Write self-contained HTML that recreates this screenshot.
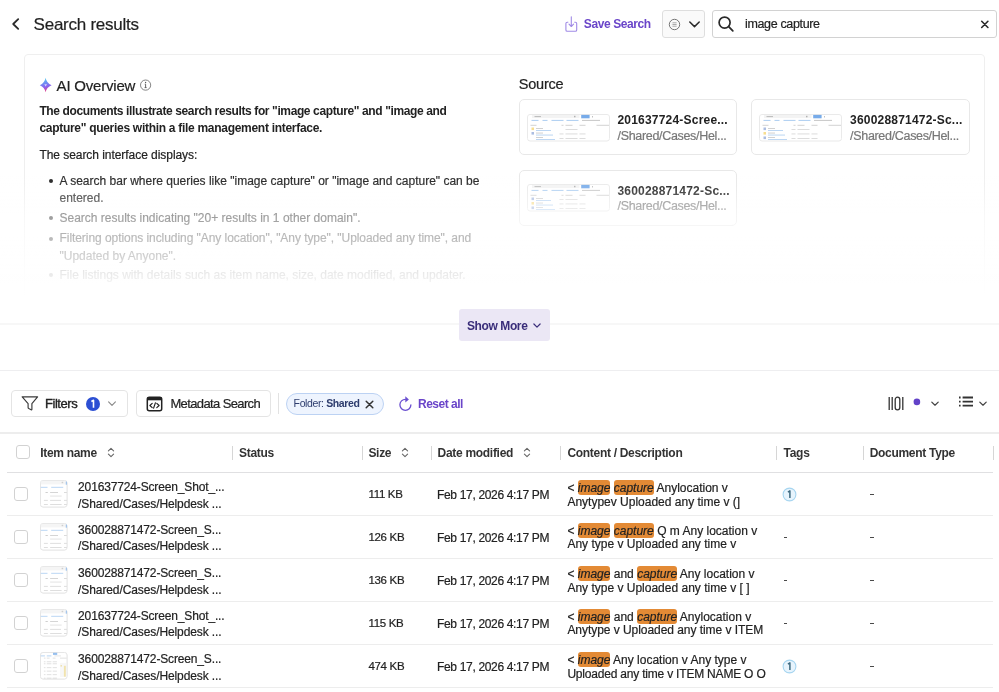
<!DOCTYPE html>
<html><head><meta charset="utf-8"><style>
html,body{margin:0;padding:0;background:#fff;width:999px;height:692px;overflow:hidden;position:relative;font-family:"Liberation Sans", sans-serif;}
.t{position:absolute;white-space:nowrap;line-height:1;}
.b{position:absolute;box-sizing:border-box;}
#wrap{position:absolute;left:0;top:0;width:999px;height:692px;will-change:transform;}
</style></head><body><div id="wrap">
<svg class="b" style="left:10px;top:16px;" width="12" height="16" viewBox="0 0 12 16"><polyline points="8.2,3.2 3.2,8 8.2,12.8" fill="none" stroke="#2a2a2a" stroke-width="1.8" stroke-linecap="round" stroke-linejoin="round"/></svg>
<div class="t " style="left:33.6px;top:16.00px;font-size:17px;font-weight:400;color:#1f1f1f;letter-spacing:-0.25px;-webkit-text-stroke:0.2px currentColor;">Search results</div>
<svg class="b" style="left:564px;top:15px;" width="15" height="18" viewBox="0 0 15 18"><path d="M4.3 7.2 H3.2 Q1.9 7.2 1.9 8.5 V15 Q1.9 16.3 3.2 16.3 H11.4 Q12.7 16.3 12.7 15 V8.5 Q12.7 7.2 11.4 7.2 H10.3" fill="none" stroke="#a08be6" stroke-width="1.1"/><path d="M7.3 1.8 V11.5 M5 9.2 L7.3 11.5 L9.6 9.2" fill="none" stroke="#a08be6" stroke-width="1.1" stroke-linecap="round" stroke-linejoin="round"/></svg>
<div class="t " style="left:583.8px;top:18.00px;font-size:12px;font-weight:700;color:#6a45c9;letter-spacing:-0.4px;">Save Search</div>
<div class="b" style="left:662px;top:10px;width:43px;height:28px;background:#fafafa;border:1px solid #dedede;border-radius:3px;"></div>
<svg class="b" style="left:668px;top:18px;" width="13" height="13" viewBox="0 0 13 13"><circle cx="6.5" cy="6.5" r="5.2" fill="none" stroke="#666" stroke-width="0.9"/><path d="M4.6 4.8 H8.6 M4.6 6.5 H8.6 M4.6 8.2 H8.6" stroke="#888" stroke-width="0.7"/><path d="M3.9 4.8 H4.2 M3.9 6.5 H4.2 M3.9 8.2 H4.2" stroke="#888" stroke-width="0.7"/></svg>
<svg class="b" style="left:688px;top:20px;" width="13" height="9" viewBox="0 0 13 9"><polyline points="1.8,2 6.5,6.6 11.2,2" fill="none" stroke="#2a2a2a" stroke-width="1.5" stroke-linecap="round" stroke-linejoin="round"/></svg>
<div class="b" style="left:712px;top:10px;width:285px;height:28px;background:#fff;border:1px solid #d2d2d2;border-radius:3px;"></div>
<svg class="b" style="left:717px;top:15px;" width="18" height="18" viewBox="0 0 18 18"><circle cx="7.6" cy="7.6" r="5.5" fill="none" stroke="#2a2a2a" stroke-width="1.7"/><path d="M11.7 11.7 L15.8 15.8" stroke="#2a2a2a" stroke-width="1.8" stroke-linecap="round"/></svg>
<div class="t " style="left:745px;top:18.00px;font-size:12.5px;font-weight:400;color:#222;letter-spacing:-0.35px;-webkit-text-stroke:0.2px currentColor;">image capture</div>
<svg class="b" style="left:979px;top:19px;" width="12" height="11" viewBox="0 0 12 11"><path d="M2.7 2.3 L8.9 8.5 M8.9 2.3 L2.7 8.5" stroke="#2a2a2a" stroke-width="1.6" stroke-linecap="round"/></svg>
<div class="b" style="left:24px;top:54px;width:961px;height:276px;border:1px solid #efefef;border-radius:4px;"></div>
<svg class="b" style="left:39px;top:77px;" width="14" height="16" viewBox="0 0 14 16"><defs><linearGradient id="sg" x1="0" y1="0" x2="0.2" y2="1"><stop offset="0" stop-color="#57e3ee"/><stop offset="0.4" stop-color="#6b93f3"/><stop offset="0.7" stop-color="#8a62ee"/><stop offset="1" stop-color="#e0448f"/></linearGradient></defs><path d="M6.6 0.8 Q7.6 6.2 12.6 8.2 Q7.6 10.2 6.6 15.2 Q5.6 10.2 0.8 8.2 Q5.6 6.2 6.6 0.8 Z" fill="url(#sg)"/><path d="M5.3 7.2 L8 7.2 L6.6 9.6 Z" fill="#fff" opacity="0.7"/></svg>
<div class="t " style="left:56.6px;top:78.00px;font-size:15px;font-weight:400;color:#222;letter-spacing:-0.2px;-webkit-text-stroke:0.2px currentColor;">AI Overview</div>
<svg class="b" style="left:139px;top:79px;" width="13" height="13" viewBox="0 0 13 13"><circle cx="6.6" cy="6.1" r="5.1" fill="none" stroke="#777" stroke-width="0.9"/><path d="M6.6 5.2 V8.6 M5.6 8.6 H7.6 M5.8 5.2 H6.6" stroke="#555" stroke-width="0.9"/><circle cx="6.6" cy="3.5" r="0.65" fill="#555"/></svg>
<div class="t " style="left:39.4px;top:105.00px;font-size:12px;font-weight:700;color:#222;letter-spacing:-0.38px;">The documents illustrate search results for "image capture" and "image and</div>
<div class="t " style="left:39.4px;top:122.00px;font-size:12px;font-weight:700;color:#222;letter-spacing:-0.29px;">capture" queries within a file management interface.</div>
<div class="t " style="left:39.4px;top:149.00px;font-size:12px;font-weight:400;color:#222;letter-spacing:-0.05px;-webkit-text-stroke:0.2px currentColor;">The search interface displays:</div>
<div class="b" style="left:48.5px;top:179px;width:4.0px;height:4px;background:#222;border-radius:50%;"></div>
<div class="t " style="left:59.5px;top:175.00px;font-size:12px;font-weight:400;color:#222;letter-spacing:0px;-webkit-text-stroke:0.2px currentColor;">A search bar where queries like "image capture" or "image and capture" can be</div>
<div class="t " style="left:59.5px;top:192.00px;font-size:12px;font-weight:400;color:#222;letter-spacing:0px;-webkit-text-stroke:0.2px currentColor;">entered.</div>
<div class="b" style="left:48.5px;top:216px;width:4.0px;height:4px;background:#222;border-radius:50%;"></div>
<div class="t " style="left:59.5px;top:212.00px;font-size:12px;font-weight:400;color:#222;letter-spacing:0px;-webkit-text-stroke:0.2px currentColor;">Search results indicating "20+ results in 1 other domain".</div>
<div class="b" style="left:48.5px;top:236.5px;width:4.0px;height:4.0px;background:#222;border-radius:50%;"></div>
<div class="t " style="left:59.5px;top:232.00px;font-size:12px;font-weight:400;color:#222;letter-spacing:-0.06px;-webkit-text-stroke:0.2px currentColor;">Filtering options including "Any location", "Any type", "Uploaded any time", and</div>
<div class="t " style="left:59.5px;top:250.00px;font-size:12px;font-weight:400;color:#222;letter-spacing:0px;-webkit-text-stroke:0.2px currentColor;">"Updated by Anyone".</div>
<div class="b" style="left:48.5px;top:273px;width:4.0px;height:4px;background:#222;border-radius:50%;"></div>
<div class="t " style="left:59.5px;top:269.00px;font-size:12px;font-weight:400;color:#222;letter-spacing:0px;-webkit-text-stroke:0.2px currentColor;">File listings with details such as item name, size, date modified, and updater.</div>
<div class="t " style="left:518.7px;top:77.00px;font-size:14.5px;font-weight:400;color:#222;letter-spacing:-0.2px;-webkit-text-stroke:0.2px currentColor;">Source</div>
<div class="b" style="left:518.7px;top:99px;width:218.5px;height:56px;border:1px solid #e8e8e8;border-radius:5px;background:#fff;"></div>
<svg class="b" style="left:526.5px;top:113.5px;" width="83" height="28" viewBox="0 0 83 28"><g opacity="0.75"><rect x="0.5" y="0.5" width="82" height="26.5" rx="2.5" fill="#fff" stroke="#e3e3e3"/><rect x="5" y="0.9" width="47.5" height="3.2" fill="#f0f0f0"/><rect x="7.5" y="2" width="6.5" height="1.1" fill="#aaa"/><rect x="47" y="1.8" width="1.5" height="1.5" fill="#999"/><rect x="54.2" y="0.9" width="8.399999999999999" height="3.4" fill="#4a90e2"/><rect x="65" y="2" width="0.7999999999999972" height="1.5" fill="#999"/><rect x="4.5" y="5.9" width="7.0" height="1.1" fill="#9cc3ee"/><rect x="15.5" y="5.9" width="5.0" height="1.1" fill="#9cc3ee"/><rect x="24.5" y="5.9" width="12.0" height="1.1" fill="#9cc3ee"/><rect x="39.5" y="5.9" width="12.0" height="1.1" fill="#9cc3ee"/><rect x="55" y="5.9" width="18" height="1.1" fill="#bbb"/><rect x="3.5" y="10.8" width="6.0" height="1" fill="#c4c4c4"/><rect x="34.5" y="10.8" width="2.0" height="1" fill="#c4c4c4"/><rect x="38.5" y="10.8" width="7.0" height="1" fill="#c4c4c4"/><rect x="52.5" y="10.8" width="6.0" height="1" fill="#c4c4c4"/><rect x="69.5" y="10.8" width="12.5" height="1" fill="#c4c4c4"/><rect x="4.5" y="13.5" width="2.5" height="2.6" fill="#f5d36a"/><rect x="9" y="14.1" width="7" height="0.9" fill="#bbb"/><rect x="9" y="16.1" width="15" height="0.9" fill="#9cc3ee"/><rect x="38.5" y="15.0" width="12.0" height="0.9" fill="#ccc"/><rect x="4.5" y="18" width="2.5" height="2.6" fill="#8fa8d8"/><rect x="9" y="18.6" width="7" height="0.9" fill="#bbb"/><rect x="9" y="20.6" width="17" height="0.9" fill="#9cc3ee"/><rect x="32.5" y="19.5" width="4.0" height="0.9" fill="#ccc"/><rect x="38.5" y="19.5" width="12.0" height="0.9" fill="#ccc"/><rect x="52.5" y="19.5" width="6.0" height="0.9" fill="#ccc"/><rect x="9" y="23.1" width="7" height="0.9" fill="#bbb"/><rect x="9" y="25.1" width="19" height="0.9" fill="#9cc3ee"/><rect x="32.5" y="24.0" width="4.0" height="0.9" fill="#ccc"/><rect x="38.5" y="24.0" width="12.0" height="0.9" fill="#ccc"/><rect x="52.5" y="24.0" width="6.0" height="0.9" fill="#ccc"/></g></svg>
<div class="t " style="left:617.5px;top:114.00px;font-size:12px;font-weight:700;color:#222;letter-spacing:0.2px;">201637724-Scree...</div>
<div class="t " style="left:617.5px;top:130.00px;font-size:12.5px;font-weight:400;color:#777;letter-spacing:-0.32px;-webkit-text-stroke:0.2px currentColor;">/Shared/Cases/Hel...</div>
<div class="b" style="left:751.3px;top:99px;width:218.5px;height:56px;border:1px solid #e8e8e8;border-radius:5px;background:#fff;"></div>
<svg class="b" style="left:759.0999999999999px;top:113.5px;" width="83" height="28" viewBox="0 0 83 28"><g opacity="0.75"><rect x="0.5" y="0.5" width="82" height="26.5" rx="2.5" fill="#fff" stroke="#e3e3e3"/><rect x="5" y="0.9" width="47.5" height="3.2" fill="#f0f0f0"/><rect x="7.5" y="2" width="6.5" height="1.1" fill="#aaa"/><rect x="47" y="1.8" width="1.5" height="1.5" fill="#999"/><rect x="54.2" y="0.9" width="8.399999999999999" height="3.4" fill="#4a90e2"/><rect x="65" y="2" width="0.7999999999999972" height="1.5" fill="#999"/><rect x="4.5" y="5.9" width="7.0" height="1.1" fill="#9cc3ee"/><rect x="15.5" y="5.9" width="5.0" height="1.1" fill="#9cc3ee"/><rect x="24.5" y="5.9" width="12.0" height="1.1" fill="#9cc3ee"/><rect x="39.5" y="5.9" width="12.0" height="1.1" fill="#9cc3ee"/><rect x="55" y="5.9" width="18" height="1.1" fill="#bbb"/><rect x="3.5" y="10.8" width="6.0" height="1" fill="#c4c4c4"/><rect x="34.5" y="10.8" width="2.0" height="1" fill="#c4c4c4"/><rect x="38.5" y="10.8" width="7.0" height="1" fill="#c4c4c4"/><rect x="52.5" y="10.8" width="6.0" height="1" fill="#c4c4c4"/><rect x="69.5" y="10.8" width="12.5" height="1" fill="#c4c4c4"/><rect x="4.5" y="13.5" width="2.5" height="2.6" fill="#8fa8d8"/><rect x="9" y="14.1" width="7" height="0.9" fill="#bbb"/><rect x="9" y="16.1" width="15" height="0.9" fill="#9cc3ee"/><rect x="32.5" y="15.0" width="4.0" height="0.9" fill="#ccc"/><rect x="38.5" y="15.0" width="12.0" height="0.9" fill="#ccc"/><rect x="4.5" y="18" width="2.5" height="2.6" fill="#f5d36a"/><rect x="9" y="18.6" width="7" height="0.9" fill="#bbb"/><rect x="9" y="20.6" width="17" height="0.9" fill="#9cc3ee"/><rect x="32.5" y="19.5" width="4.0" height="0.9" fill="#ccc"/><rect x="38.5" y="19.5" width="12.0" height="0.9" fill="#ccc"/><rect x="52.5" y="19.5" width="6.0" height="0.9" fill="#ccc"/><rect x="4.5" y="22.5" width="2.5" height="2.6" fill="#8fa8d8"/><rect x="9" y="23.1" width="7" height="0.9" fill="#bbb"/><rect x="9" y="25.1" width="19" height="0.9" fill="#9cc3ee"/><rect x="32.5" y="24.0" width="4.0" height="0.9" fill="#ccc"/><rect x="38.5" y="24.0" width="12.0" height="0.9" fill="#ccc"/><rect x="52.5" y="24.0" width="6.0" height="0.9" fill="#ccc"/></g></svg>
<div class="t " style="left:850.0999999999999px;top:114.00px;font-size:12px;font-weight:700;color:#222;letter-spacing:0.2px;">360028871472-Sc...</div>
<div class="t " style="left:850.0999999999999px;top:130.00px;font-size:12.5px;font-weight:400;color:#777;letter-spacing:-0.32px;-webkit-text-stroke:0.2px currentColor;">/Shared/Cases/Hel...</div>
<div class="b" style="left:518.7px;top:169.5px;width:218.5px;height:56.0px;border:1px solid #e8e8e8;border-radius:5px;background:#fff;"></div>
<svg class="b" style="left:526.5px;top:184.0px;" width="83" height="28" viewBox="0 0 83 28"><g opacity="0.75"><rect x="0.5" y="0.5" width="82" height="26.5" rx="2.5" fill="#fff" stroke="#e3e3e3"/><rect x="5" y="0.9" width="47.5" height="3.2" fill="#f0f0f0"/><rect x="7.5" y="2" width="6.5" height="1.1" fill="#aaa"/><rect x="47" y="1.8" width="1.5" height="1.5" fill="#999"/><rect x="54.2" y="0.9" width="8.399999999999999" height="3.4" fill="#4a90e2"/><rect x="65" y="2" width="0.7999999999999972" height="1.5" fill="#999"/><rect x="4.5" y="5.9" width="7.0" height="1.1" fill="#9cc3ee"/><rect x="15.5" y="5.9" width="5.0" height="1.1" fill="#9cc3ee"/><rect x="24.5" y="5.9" width="12.0" height="1.1" fill="#9cc3ee"/><rect x="39.5" y="5.9" width="12.0" height="1.1" fill="#9cc3ee"/><rect x="55" y="5.9" width="18" height="1.1" fill="#bbb"/><rect x="3.5" y="10.8" width="6.0" height="1" fill="#c4c4c4"/><rect x="34.5" y="10.8" width="2.0" height="1" fill="#c4c4c4"/><rect x="38.5" y="10.8" width="7.0" height="1" fill="#c4c4c4"/><rect x="52.5" y="10.8" width="6.0" height="1" fill="#c4c4c4"/><rect x="69.5" y="10.8" width="12.5" height="1" fill="#c4c4c4"/><rect x="4.5" y="13.5" width="2.5" height="2.6" fill="#8fa8d8"/><rect x="9" y="14.1" width="7" height="0.9" fill="#bbb"/><rect x="9" y="16.1" width="15" height="0.9" fill="#9cc3ee"/><rect x="32.5" y="15.0" width="4.0" height="0.9" fill="#ccc"/><rect x="38.5" y="15.0" width="12.0" height="0.9" fill="#ccc"/><rect x="4.5" y="18" width="2.5" height="2.6" fill="#f5d36a"/><rect x="9" y="18.6" width="7" height="0.9" fill="#bbb"/><rect x="9" y="20.6" width="17" height="0.9" fill="#9cc3ee"/><rect x="32.5" y="19.5" width="4.0" height="0.9" fill="#ccc"/><rect x="38.5" y="19.5" width="12.0" height="0.9" fill="#ccc"/><rect x="52.5" y="19.5" width="6.0" height="0.9" fill="#ccc"/><rect x="4.5" y="22.5" width="2.5" height="2.6" fill="#8fa8d8"/><rect x="9" y="23.1" width="7" height="0.9" fill="#bbb"/><rect x="9" y="25.1" width="19" height="0.9" fill="#9cc3ee"/><rect x="32.5" y="24.0" width="4.0" height="0.9" fill="#ccc"/><rect x="38.5" y="24.0" width="12.0" height="0.9" fill="#ccc"/><rect x="52.5" y="24.0" width="6.0" height="0.9" fill="#ccc"/></g></svg>
<div class="t " style="left:617.5px;top:185.00px;font-size:12px;font-weight:700;color:#222;letter-spacing:0.2px;">360028871472-Sc...</div>
<div class="t " style="left:617.5px;top:200.00px;font-size:12.5px;font-weight:400;color:#777;letter-spacing:-0.32px;-webkit-text-stroke:0.2px currentColor;">/Shared/Cases/Hel...</div>
<div class="b" style="left:0px;top:150px;width:999px;height:150px;background:linear-gradient(to bottom, rgba(255,255,255,0) 0px, rgba(255,255,255,0) 25px, rgba(255,255,255,0.15) 40px, rgba(255,255,255,0.4) 55px, rgba(255,255,255,0.55) 65px, rgba(255,255,255,0.68) 87px, rgba(255,255,255,0.77) 104px, rgba(255,255,255,0.9) 124px, #fff 148px);"></div>
<div class="b" style="left:0px;top:296px;width:999px;height:74px;background:#fff;"></div>
<div class="b" style="left:0px;top:323px;width:999px;height:2px;background:#f7f7f7;"></div>
<div class="b" style="left:459.3px;top:308.7px;width:90.49999999999994px;height:32.30000000000001px;background:#ebe7f5;border-radius:3px;"></div>
<div class="t " style="left:467px;top:320.00px;font-size:12px;font-weight:700;color:#3a2e7a;letter-spacing:-0.4px;">Show More</div>
<svg class="b" style="left:532px;top:322px;" width="10" height="7" viewBox="0 0 10 7"><polyline points="1.9,2 5,5.1 8.1,2" fill="none" stroke="#3a2e7a" stroke-width="1.2" stroke-linecap="round" stroke-linejoin="round"/></svg>
<div class="b" style="left:0px;top:370px;width:999px;height:1px;background:#eeeef0;"></div>
<div class="b" style="left:10.8px;top:390px;width:117.2px;height:27.30000000000001px;border:1px solid #e4e4e4;border-radius:4px;"></div>
<svg class="b" style="left:21px;top:395px;" width="18" height="17" viewBox="0 0 18 17"><path d="M1.2 1.8 H16.6 L10.9 8.6 V14.3 Q10.9 15.2 10.1 14.8 L7.8 13.6 Q7.1 13.2 7.1 12.5 V8.6 Z" fill="none" stroke="#3a3a3a" stroke-width="1.15" stroke-linejoin="round"/></svg>
<div class="t " style="left:45px;top:397.00px;font-size:13px;font-weight:400;color:#222;letter-spacing:-0.45px;-webkit-text-stroke:0.35px currentColor;">Filters</div>
<svg class="b" style="left:86.1px;top:396.8px;" width="14" height="14" viewBox="0 0 14 14"><circle cx="7" cy="7" r="7" fill="#2c4fd3"/><path d="M5.4 4.5 L7.5 3.3 V10.8" fill="none" stroke="#fff" stroke-width="1.6" stroke-linejoin="round"/></svg>
<svg class="b" style="left:107px;top:400px;" width="10" height="8" viewBox="0 0 10 8"><polyline points="1.6,1.8 5,5.3 8.4,1.8" fill="none" stroke="#888" stroke-width="1.1" stroke-linecap="round" stroke-linejoin="round"/></svg>
<div class="b" style="left:135.6px;top:389.8px;width:135.70000000000002px;height:27.19999999999999px;border:1px solid #e4e4e4;border-radius:4px;"></div>
<svg class="b" style="left:146px;top:395.5px;" width="17" height="16" viewBox="0 0 17 16"><rect x="1.3" y="1.3" width="14.4" height="13.4" rx="2" fill="none" stroke="#222" stroke-width="1.5"/><rect x="1.3" y="1.3" width="14.4" height="3" fill="#222"/><path d="M6.2 7.4 L3.9 9.5 L6.2 11.6 M10.8 7.4 L13.1 9.5 L10.8 11.6 M9.4 6.9 L7.6 12.1" fill="none" stroke="#222" stroke-width="1.2" stroke-linecap="round" stroke-linejoin="round"/></svg>
<div class="t " style="left:170.4px;top:397.00px;font-size:13px;font-weight:400;color:#222;letter-spacing:-0.62px;-webkit-text-stroke:0.2px currentColor;">Metadata Search</div>
<div class="b" style="left:278.2px;top:393px;width:1.0px;height:21px;background:#e2e2e2;"></div>
<div class="b" style="left:286px;top:393px;width:98px;height:21.5px;background:#eef4fe;border:1px solid #bcd2f3;border-radius:11px;"></div>
<div class="t " style="left:293.6px;top:398.00px;font-size:10.5px;font-weight:400;color:#2e3d6e;letter-spacing:-0.38px;">Folder: <b style="font-weight:700">Shared</b></div>
<svg class="b" style="left:364px;top:398.5px;" width="11" height="11" viewBox="0 0 11 11"><path d="M2.2 2.2 L8.8 8.8 M8.8 2.2 L2.2 8.8" stroke="#333" stroke-width="1.5" stroke-linecap="round"/></svg>
<svg class="b" style="left:398px;top:394px;" width="16" height="18" viewBox="0 0 16 18"><path d="M7.4 5.3 A5.5 5.5 0 1 0 12.9 10.8" fill="none" stroke="#6a4fd0" stroke-width="1.3" stroke-linecap="round"/><path d="M7.3 2.2 L10.9 5.4 L7.3 8.6 Z" fill="#6a4fd0"/></svg>
<div class="t " style="left:418px;top:398.00px;font-size:12px;font-weight:700;color:#6a45c9;letter-spacing:-0.5px;">Reset all</div>
<svg class="b" style="left:888px;top:396px;" width="17" height="15" viewBox="0 0 17 15"><path d="M1.2 1 V14 M4.2 1 V14 M14.8 1 V14" stroke="#333" stroke-width="1.3"/><rect x="7.2" y="1.2" width="4.6" height="12.6" rx="2.3" fill="none" stroke="#333" stroke-width="1.3"/></svg>
<svg class="b" style="left:913px;top:398px;" width="8" height="8" viewBox="0 0 8 8"><circle cx="3.9" cy="3.9" r="3.3" fill="#6242c8"/></svg>
<svg class="b" style="left:929.5px;top:399.5px;" width="10" height="8" viewBox="0 0 10 8"><polyline points="1.8,2.1 5,5.2 8.2,2.1" fill="none" stroke="#444" stroke-width="1.25" stroke-linecap="round" stroke-linejoin="round"/></svg>
<svg class="b" style="left:957.5px;top:396px;" width="16" height="12" viewBox="0 0 16 12"><path d="M1 1.5 H2.6 M1 5.6 H2.6 M1 9.7 H2.6 M4.6 1.5 H15 M4.6 5.6 H15 M4.6 9.7 H15" stroke="#333" stroke-width="1.8"/></svg>
<svg class="b" style="left:978px;top:399.5px;" width="10" height="8" viewBox="0 0 10 8"><polyline points="1.8,2.1 5,5.2 8.2,2.1" fill="none" stroke="#444" stroke-width="1.25" stroke-linecap="round" stroke-linejoin="round"/></svg>
<div class="b" style="left:0px;top:432px;width:999px;height:2px;background:#ededed;"></div>
<div class="b" style="left:15.6px;top:445px;width:14.000000000000002px;height:14px;border:1.3px solid #d2d2d2;border-radius:3px;"></div>
<div class="t " style="left:40.2px;top:447.00px;font-size:12px;font-weight:700;color:#333;letter-spacing:-0.3px;">Item name</div>
<svg class="b" style="left:107px;top:447px;" width="8" height="12" viewBox="0 0 8 12"><polyline points="1.4,3.8 4,1.3 6.6,3.8" fill="none" stroke="#666" stroke-width="1.1" stroke-linecap="round" stroke-linejoin="round"/><polyline points="1.4,7.2 4,9.7 6.6,7.2" fill="none" stroke="#666" stroke-width="1.1" stroke-linecap="round" stroke-linejoin="round"/></svg>
<div class="b" style="left:232px;top:446.4px;width:1px;height:13.400000000000034px;background:#d6d6d6;"></div>
<div class="b" style="left:361.5px;top:446.4px;width:1.0px;height:13.400000000000034px;background:#d6d6d6;"></div>
<div class="b" style="left:431px;top:446.4px;width:1px;height:13.400000000000034px;background:#d6d6d6;"></div>
<div class="b" style="left:560.4px;top:446.4px;width:1.0px;height:13.400000000000034px;background:#d6d6d6;"></div>
<div class="b" style="left:776.4px;top:446.4px;width:1.0px;height:13.400000000000034px;background:#d6d6d6;"></div>
<div class="b" style="left:863px;top:446.4px;width:1px;height:13.400000000000034px;background:#d6d6d6;"></div>
<div class="b" style="left:992.5px;top:446.4px;width:1.0px;height:13.400000000000034px;background:#d6d6d6;"></div>
<div class="t " style="left:239px;top:447.00px;font-size:12px;font-weight:700;color:#333;letter-spacing:-0.3px;">Status</div>
<div class="t " style="left:368.4px;top:447.00px;font-size:12px;font-weight:700;color:#333;letter-spacing:-0.3px;">Size</div>
<svg class="b" style="left:401.4px;top:447px;" width="8" height="12" viewBox="0 0 8 12"><polyline points="1.4,3.8 4,1.3 6.6,3.8" fill="none" stroke="#666" stroke-width="1.1" stroke-linecap="round" stroke-linejoin="round"/><polyline points="1.4,7.2 4,9.7 6.6,7.2" fill="none" stroke="#666" stroke-width="1.1" stroke-linecap="round" stroke-linejoin="round"/></svg>
<div class="t " style="left:437.6px;top:447.00px;font-size:12px;font-weight:700;color:#333;letter-spacing:-0.3px;">Date modified</div>
<svg class="b" style="left:523.4px;top:447px;" width="8" height="12" viewBox="0 0 8 12"><polyline points="1.4,3.8 4,1.3 6.6,3.8" fill="none" stroke="#666" stroke-width="1.1" stroke-linecap="round" stroke-linejoin="round"/><polyline points="1.4,7.2 4,9.7 6.6,7.2" fill="none" stroke="#666" stroke-width="1.1" stroke-linecap="round" stroke-linejoin="round"/></svg>
<div class="t " style="left:567.4px;top:447.00px;font-size:12px;font-weight:700;color:#333;letter-spacing:-0.3px;">Content / Description</div>
<div class="t " style="left:783.6px;top:447.00px;font-size:12px;font-weight:700;color:#333;letter-spacing:-0.3px;">Tags</div>
<div class="t " style="left:869.7px;top:447.00px;font-size:12px;font-weight:700;color:#333;letter-spacing:-0.3px;">Document Type</div>
<div class="b" style="left:7px;top:472px;width:986px;height:1px;background:#e0e0e2;"></div>
<div class="b" style="left:14px;top:487.0px;width:14px;height:14.0px;border:1.3px solid #d2d2d2;border-radius:3px;"></div>
<svg class="b" style="left:40.4px;top:480.0px;" width="28" height="28" viewBox="0 0 28 28"><rect x="0.5" y="0.5" width="26.5" height="26.5" rx="2.5" fill="#fff" stroke="#e6e6e6"/><g opacity="0.7"><rect x="0.5" y="0.5" width="26.5" height="26.5" rx="2.5" fill="#fff" stroke="#e6e6e6"/><rect x="0.8" y="0.8" width="25.7" height="3.6" fill="#f2f2f2"/><rect x="21.6" y="1.8" width="1.5999999999999979" height="1.4" fill="#bbb"/><rect x="25.8" y="1.6" width="1.0" height="3.1" fill="#6aa5e8"/><rect x="0.8" y="6.8" width="6.7" height="1.1" fill="#a8ccf2"/><rect x="11.2" y="6.8" width="12.0" height="1.1" fill="#a8ccf2"/><rect x="5.5" y="12" width="2.3" height="1" fill="#bbb"/><rect x="10.1" y="12" width="7.9" height="1" fill="#c4c4c4"/><rect x="24" y="12" width="2.8000000000000007" height="1" fill="#ccc"/><rect x="10.1" y="15.6" width="11.500000000000002" height="0.9" fill="#d4d4d4"/><rect x="3.9" y="19.9" width="3.9" height="0.9" fill="#ccc"/><rect x="10.1" y="19.9" width="10.9" height="0.9" fill="#ccc"/><rect x="24" y="19.9" width="2.8000000000000007" height="0.9" fill="#ccc"/><rect x="3.9" y="24.1" width="3.9" height="0.9" fill="#ccc"/><rect x="10.1" y="24.1" width="11.500000000000002" height="0.9" fill="#ccc"/><rect x="24" y="24.1" width="2.8000000000000007" height="0.9" fill="#ccc"/></g></svg>
<div class="t " style="left:78.1px;top:481.00px;font-size:12px;font-weight:400;color:#222;letter-spacing:-0.15px;-webkit-text-stroke:0.2px currentColor;">201637724-Screen_Shot_...</div>
<div class="t " style="left:78.1px;top:498.00px;font-size:12px;font-weight:400;color:#222;letter-spacing:-0.1px;-webkit-text-stroke:0.2px currentColor;">/Shared/Cases/Helpdesk ...</div>
<div class="t " style="left:368.4px;top:489.00px;font-size:11.5px;font-weight:400;color:#222;letter-spacing:-0.3px;-webkit-text-stroke:0.2px currentColor;">111 KB</div>
<div class="t " style="left:437px;top:489.00px;font-size:12px;font-weight:400;color:#222;letter-spacing:-0.33px;-webkit-text-stroke:0.2px currentColor;">Feb 17, 2026 4:17 PM</div>
<div class="t " style="left:567.4px;top:482.00px;font-size:12px;font-weight:400;color:#222;letter-spacing:0px;-webkit-text-stroke:0.2px currentColor;">&lt; <span style="background:#e38a35;border-radius:3px;font-style:italic;padding:1px 0 0 0;">image</span> <span style="background:#e38a35;border-radius:3px;font-style:italic;padding:1px 0 0 0;">capture</span> Anylocation v</div>
<div class="t " style="left:567.4px;top:496.00px;font-size:12px;font-weight:400;color:#222;letter-spacing:0px;-webkit-text-stroke:0.2px currentColor;">Anytypev Uploaded any time v (]</div>
<svg class="b" style="left:781.7px;top:486.5px;" width="15" height="15" viewBox="0 0 15 15"><circle cx="7.5" cy="7.5" r="6.4" fill="#e7f4fd" stroke="#a6d5f0" stroke-width="1.1"/><path d="M5.9 5.1 L7.9 3.9 V11" fill="none" stroke="#3d6a80" stroke-width="1.5" stroke-linejoin="round"/></svg>
<div class="b" style="left:869.9px;top:493.7px;width:3.8999999999999773px;height:1.3000000000000114px;background:#4a4a4a;"></div>
<div class="b" style="left:7px;top:515.0px;width:986px;height:1.0px;background:#ededed;"></div>
<div class="b" style="left:14px;top:530.0px;width:14px;height:14.0px;border:1.3px solid #d2d2d2;border-radius:3px;"></div>
<svg class="b" style="left:40.4px;top:523.0px;" width="28" height="28" viewBox="0 0 28 28"><rect x="0.5" y="0.5" width="26.5" height="26.5" rx="2.5" fill="#fff" stroke="#e6e6e6"/><g opacity="0.7"><rect x="0.5" y="0.5" width="26.5" height="26.5" rx="2.5" fill="#fff" stroke="#e6e6e6"/><rect x="0.8" y="0.8" width="25.7" height="3.6" fill="#f2f2f2"/><rect x="21.6" y="1.8" width="1.5999999999999979" height="1.4" fill="#bbb"/><rect x="25.8" y="1.6" width="1.0" height="3.1" fill="#6aa5e8"/><rect x="0.8" y="6.8" width="6.7" height="1.1" fill="#a8ccf2"/><rect x="11.2" y="6.8" width="12.0" height="1.1" fill="#a8ccf2"/><rect x="5.5" y="12" width="2.3" height="1" fill="#bbb"/><rect x="10.1" y="12" width="7.9" height="1" fill="#c4c4c4"/><rect x="24" y="12" width="2.8000000000000007" height="1" fill="#ccc"/><rect x="10.1" y="15.6" width="11.500000000000002" height="0.9" fill="#d4d4d4"/><rect x="3.9" y="19.9" width="3.9" height="0.9" fill="#ccc"/><rect x="10.1" y="19.9" width="10.9" height="0.9" fill="#ccc"/><rect x="24" y="19.9" width="2.8000000000000007" height="0.9" fill="#ccc"/><rect x="3.9" y="24.1" width="3.9" height="0.9" fill="#ccc"/><rect x="10.1" y="24.1" width="11.500000000000002" height="0.9" fill="#ccc"/><rect x="24" y="24.1" width="2.8000000000000007" height="0.9" fill="#ccc"/></g></svg>
<div class="t " style="left:78.1px;top:524.00px;font-size:12px;font-weight:400;color:#222;letter-spacing:-0.15px;-webkit-text-stroke:0.2px currentColor;">360028871472-Screen_S...</div>
<div class="t " style="left:78.1px;top:540.00px;font-size:12px;font-weight:400;color:#222;letter-spacing:-0.1px;-webkit-text-stroke:0.2px currentColor;">/Shared/Cases/Helpdesk ...</div>
<div class="t " style="left:368.4px;top:532.00px;font-size:11.5px;font-weight:400;color:#222;letter-spacing:-0.3px;-webkit-text-stroke:0.2px currentColor;">126 KB</div>
<div class="t " style="left:437px;top:532.00px;font-size:12px;font-weight:400;color:#222;letter-spacing:-0.33px;-webkit-text-stroke:0.2px currentColor;">Feb 17, 2026 4:17 PM</div>
<div class="t " style="left:567.4px;top:525.00px;font-size:12px;font-weight:400;color:#222;letter-spacing:0px;-webkit-text-stroke:0.2px currentColor;">&lt; <span style="background:#e38a35;border-radius:3px;font-style:italic;padding:1px 0 0 0;">image</span> <span style="background:#e38a35;border-radius:3px;font-style:italic;padding:1px 0 0 0;">capture</span> Q m Any location v</div>
<div class="t " style="left:567.4px;top:538.00px;font-size:12px;font-weight:400;color:#222;letter-spacing:0px;-webkit-text-stroke:0.2px currentColor;">Any type v Uploaded any time v</div>
<div class="b" style="left:783.5px;top:536.7px;width:3.7999999999999545px;height:1.2999999999999545px;background:#4a4a4a;"></div>
<div class="b" style="left:869.9px;top:536.7px;width:3.8999999999999773px;height:1.2999999999999545px;background:#4a4a4a;"></div>
<div class="b" style="left:7px;top:558.0px;width:986px;height:1.0px;background:#ededed;"></div>
<div class="b" style="left:14px;top:573.0px;width:14px;height:14.0px;border:1.3px solid #d2d2d2;border-radius:3px;"></div>
<svg class="b" style="left:40.4px;top:566.0px;" width="28" height="28" viewBox="0 0 28 28"><rect x="0.5" y="0.5" width="26.5" height="26.5" rx="2.5" fill="#fff" stroke="#e6e6e6"/><g opacity="0.7"><rect x="0.5" y="0.5" width="26.5" height="26.5" rx="2.5" fill="#fff" stroke="#e6e6e6"/><rect x="0.8" y="0.8" width="25.7" height="3.6" fill="#f2f2f2"/><rect x="21.6" y="1.8" width="1.5999999999999979" height="1.4" fill="#bbb"/><rect x="25.8" y="1.6" width="1.0" height="3.1" fill="#6aa5e8"/><rect x="0.8" y="6.8" width="6.7" height="1.1" fill="#a8ccf2"/><rect x="11.2" y="6.8" width="12.0" height="1.1" fill="#a8ccf2"/><rect x="5.5" y="12" width="2.3" height="1" fill="#bbb"/><rect x="10.1" y="12" width="7.9" height="1" fill="#c4c4c4"/><rect x="24" y="12" width="2.8000000000000007" height="1" fill="#ccc"/><rect x="10.1" y="15.6" width="11.500000000000002" height="0.9" fill="#d4d4d4"/><rect x="3.9" y="19.9" width="3.9" height="0.9" fill="#ccc"/><rect x="10.1" y="19.9" width="10.9" height="0.9" fill="#ccc"/><rect x="24" y="19.9" width="2.8000000000000007" height="0.9" fill="#ccc"/><rect x="3.9" y="24.1" width="3.9" height="0.9" fill="#ccc"/><rect x="10.1" y="24.1" width="11.500000000000002" height="0.9" fill="#ccc"/><rect x="24" y="24.1" width="2.8000000000000007" height="0.9" fill="#ccc"/></g></svg>
<div class="t " style="left:78.1px;top:567.00px;font-size:12px;font-weight:400;color:#222;letter-spacing:-0.15px;-webkit-text-stroke:0.2px currentColor;">360028871472-Screen_S...</div>
<div class="t " style="left:78.1px;top:584.00px;font-size:12px;font-weight:400;color:#222;letter-spacing:-0.1px;-webkit-text-stroke:0.2px currentColor;">/Shared/Cases/Helpdesk ...</div>
<div class="t " style="left:368.4px;top:575.00px;font-size:11.5px;font-weight:400;color:#222;letter-spacing:-0.3px;-webkit-text-stroke:0.2px currentColor;">136 KB</div>
<div class="t " style="left:437px;top:575.00px;font-size:12px;font-weight:400;color:#222;letter-spacing:-0.33px;-webkit-text-stroke:0.2px currentColor;">Feb 17, 2026 4:17 PM</div>
<div class="t " style="left:567.4px;top:568.00px;font-size:12px;font-weight:400;color:#222;letter-spacing:0px;-webkit-text-stroke:0.2px currentColor;">&lt; <span style="background:#e38a35;border-radius:3px;font-style:italic;padding:1px 0 0 0;">image</span> and <span style="background:#e38a35;border-radius:3px;font-style:italic;padding:1px 0 0 0;">capture</span> Any location v</div>
<div class="t " style="left:567.4px;top:582.00px;font-size:12px;font-weight:400;color:#222;letter-spacing:0px;-webkit-text-stroke:0.2px currentColor;">Any type v Uploaded any time v [ ]</div>
<div class="b" style="left:783.5px;top:579.7px;width:3.7999999999999545px;height:1.2999999999999545px;background:#4a4a4a;"></div>
<div class="b" style="left:869.9px;top:579.7px;width:3.8999999999999773px;height:1.2999999999999545px;background:#4a4a4a;"></div>
<div class="b" style="left:7px;top:601.0px;width:986px;height:1.0px;background:#ededed;"></div>
<div class="b" style="left:14px;top:616.0px;width:14px;height:14.0px;border:1.3px solid #d2d2d2;border-radius:3px;"></div>
<svg class="b" style="left:40.4px;top:609.0px;" width="28" height="28" viewBox="0 0 28 28"><rect x="0.5" y="0.5" width="26.5" height="26.5" rx="2.5" fill="#fff" stroke="#e6e6e6"/><g opacity="0.7"><rect x="0.5" y="0.5" width="26.5" height="26.5" rx="2.5" fill="#fff" stroke="#e6e6e6"/><rect x="0.8" y="0.8" width="25.7" height="3.6" fill="#f2f2f2"/><rect x="21.6" y="1.8" width="1.5999999999999979" height="1.4" fill="#bbb"/><rect x="25.8" y="1.6" width="1.0" height="3.1" fill="#6aa5e8"/><rect x="0.8" y="6.8" width="6.7" height="1.1" fill="#a8ccf2"/><rect x="11.2" y="6.8" width="12.0" height="1.1" fill="#a8ccf2"/><rect x="5.5" y="12" width="2.3" height="1" fill="#bbb"/><rect x="10.1" y="12" width="7.9" height="1" fill="#c4c4c4"/><rect x="24" y="12" width="2.8000000000000007" height="1" fill="#ccc"/><rect x="10.1" y="15.6" width="11.500000000000002" height="0.9" fill="#d4d4d4"/><rect x="3.9" y="19.9" width="3.9" height="0.9" fill="#ccc"/><rect x="10.1" y="19.9" width="10.9" height="0.9" fill="#ccc"/><rect x="24" y="19.9" width="2.8000000000000007" height="0.9" fill="#ccc"/><rect x="3.9" y="24.1" width="3.9" height="0.9" fill="#ccc"/><rect x="10.1" y="24.1" width="11.500000000000002" height="0.9" fill="#ccc"/><rect x="24" y="24.1" width="2.8000000000000007" height="0.9" fill="#ccc"/></g></svg>
<div class="t " style="left:78.1px;top:610.00px;font-size:12px;font-weight:400;color:#222;letter-spacing:-0.15px;-webkit-text-stroke:0.2px currentColor;">201637724-Screen_Shot_...</div>
<div class="t " style="left:78.1px;top:626.00px;font-size:12px;font-weight:400;color:#222;letter-spacing:-0.1px;-webkit-text-stroke:0.2px currentColor;">/Shared/Cases/Helpdesk ...</div>
<div class="t " style="left:368.4px;top:618.00px;font-size:11.5px;font-weight:400;color:#222;letter-spacing:-0.3px;-webkit-text-stroke:0.2px currentColor;">115 KB</div>
<div class="t " style="left:437px;top:618.00px;font-size:12px;font-weight:400;color:#222;letter-spacing:-0.33px;-webkit-text-stroke:0.2px currentColor;">Feb 17, 2026 4:17 PM</div>
<div class="t " style="left:567.4px;top:611.00px;font-size:12px;font-weight:400;color:#222;letter-spacing:0px;-webkit-text-stroke:0.2px currentColor;">&lt; <span style="background:#e38a35;border-radius:3px;font-style:italic;padding:1px 0 0 0;">image</span> and <span style="background:#e38a35;border-radius:3px;font-style:italic;padding:1px 0 0 0;">capture</span> Anylocation v</div>
<div class="t " style="left:567.4px;top:624.00px;font-size:12px;font-weight:400;color:#222;letter-spacing:-0.05px;-webkit-text-stroke:0.2px currentColor;">Anytype v Uploaded any time v ITEM</div>
<div class="b" style="left:783.5px;top:622.7px;width:3.7999999999999545px;height:1.2999999999999545px;background:#4a4a4a;"></div>
<div class="b" style="left:869.9px;top:622.7px;width:3.8999999999999773px;height:1.2999999999999545px;background:#4a4a4a;"></div>
<div class="b" style="left:7px;top:644.0px;width:986px;height:1.0px;background:#ededed;"></div>
<div class="b" style="left:14px;top:659.0px;width:14px;height:14.0px;border:1.3px solid #d2d2d2;border-radius:3px;"></div>
<svg class="b" style="left:40.4px;top:652.0px;" width="28" height="28" viewBox="0 0 28 28"><rect x="0.5" y="0.5" width="26.5" height="26.5" rx="2.5" fill="#fff" stroke="#e6e6e6"/><g opacity="0.7"><rect x="0.5" y="0.5" width="26.5" height="26.5" rx="2.5" fill="#fff" stroke="#e6e6e6"/><rect x="13" y="0.8" width="4.199999999999999" height="2.1" fill="#6aa5e8"/><rect x="0.8" y="3.4" width="4.1000000000000005" height="1" fill="#9cc3ee"/><rect x="6.8" y="3.4" width="4.6000000000000005" height="1" fill="#9cc3ee"/><rect x="14.3" y="3.4" width="6.699999999999999" height="1" fill="#ddd"/><rect x="3.9" y="5.7" width="1.6" height="0.8" fill="#ccc"/><rect x="6.8" y="5.7" width="2.8" height="0.8" fill="#ccc"/><rect x="12.7" y="5.7" width="2.8000000000000007" height="0.8" fill="#ccc"/><rect x="20" y="5.7" width="6.5" height="0.8" fill="#ccc"/><rect x="20" y="10.9" width="6.800000000000001" height="14" fill="#f4f4f4"/><rect x="3.9" y="9.4" width="1.6" height="0.8" fill="#ccc"/><rect x="6.8" y="9.4" width="4.6000000000000005" height="0.8" fill="#ccc"/><rect x="12.7" y="9.4" width="4.199999999999999" height="0.8" fill="#ccc"/><rect x="3.9" y="11.4" width="1.6" height="0.8" fill="#ccc"/><rect x="6.8" y="11.4" width="4.6000000000000005" height="0.8" fill="#ccc"/><rect x="12.7" y="11.4" width="4.199999999999999" height="0.8" fill="#ccc"/><rect x="3.9" y="15.3" width="1.6" height="0.8" fill="#ccc"/><rect x="6.8" y="15.3" width="4.6000000000000005" height="0.8" fill="#ccc"/><rect x="12.7" y="15.3" width="4.199999999999999" height="0.8" fill="#ccc"/><rect x="3.9" y="18.7" width="1.6" height="0.8" fill="#ccc"/><rect x="6.8" y="18.7" width="4.6000000000000005" height="0.8" fill="#ccc"/><rect x="12.7" y="18.7" width="4.199999999999999" height="0.8" fill="#ccc"/><rect x="3.9" y="22.3" width="1.6" height="0.8" fill="#ccc"/><rect x="6.8" y="22.3" width="4.6000000000000005" height="0.8" fill="#ccc"/><rect x="12.7" y="22.3" width="4.199999999999999" height="0.8" fill="#ccc"/><rect x="3.9" y="25.7" width="1.6" height="0.8" fill="#ccc"/><rect x="6.8" y="25.7" width="4.6000000000000005" height="0.8" fill="#ccc"/><rect x="12.7" y="25.7" width="4.199999999999999" height="0.8" fill="#ccc"/><rect x="23.9" y="13.8" width="1.9000000000000021" height="10.9" fill="#ecd88c"/><rect x="20.6" y="13" width="1.1999999999999993" height="1.6" fill="#e6cf7a"/></g></svg>
<div class="t " style="left:78.1px;top:653.00px;font-size:12px;font-weight:400;color:#222;letter-spacing:-0.15px;-webkit-text-stroke:0.2px currentColor;">360028871472-Screen_S...</div>
<div class="t " style="left:78.1px;top:670.00px;font-size:12px;font-weight:400;color:#222;letter-spacing:-0.1px;-webkit-text-stroke:0.2px currentColor;">/Shared/Cases/Helpdesk ...</div>
<div class="t " style="left:368.4px;top:661.00px;font-size:11.5px;font-weight:400;color:#222;letter-spacing:-0.3px;-webkit-text-stroke:0.2px currentColor;">474 KB</div>
<div class="t " style="left:437px;top:661.00px;font-size:12px;font-weight:400;color:#222;letter-spacing:-0.33px;-webkit-text-stroke:0.2px currentColor;">Feb 17, 2026 4:17 PM</div>
<div class="t " style="left:567.4px;top:654.00px;font-size:12px;font-weight:400;color:#222;letter-spacing:0px;-webkit-text-stroke:0.2px currentColor;">&lt; <span style="background:#e38a35;border-radius:3px;font-style:italic;padding:1px 0 0 0;">image</span> Any location v Any type v</div>
<div class="t " style="left:567.4px;top:668.00px;font-size:12px;font-weight:400;color:#222;letter-spacing:-0.2px;-webkit-text-stroke:0.2px currentColor;">Uploaded any time v ITEM NAME O O</div>
<svg class="b" style="left:781.7px;top:658.5px;" width="15" height="15" viewBox="0 0 15 15"><circle cx="7.5" cy="7.5" r="6.4" fill="#e7f4fd" stroke="#a6d5f0" stroke-width="1.1"/><path d="M5.9 5.1 L7.9 3.9 V11" fill="none" stroke="#3d6a80" stroke-width="1.5" stroke-linejoin="round"/></svg>
<div class="b" style="left:869.9px;top:665.7px;width:3.8999999999999773px;height:1.2999999999999545px;background:#4a4a4a;"></div>
<div class="b" style="left:7px;top:687.0px;width:986px;height:1.0px;background:#ededed;"></div>
</div></body></html>
